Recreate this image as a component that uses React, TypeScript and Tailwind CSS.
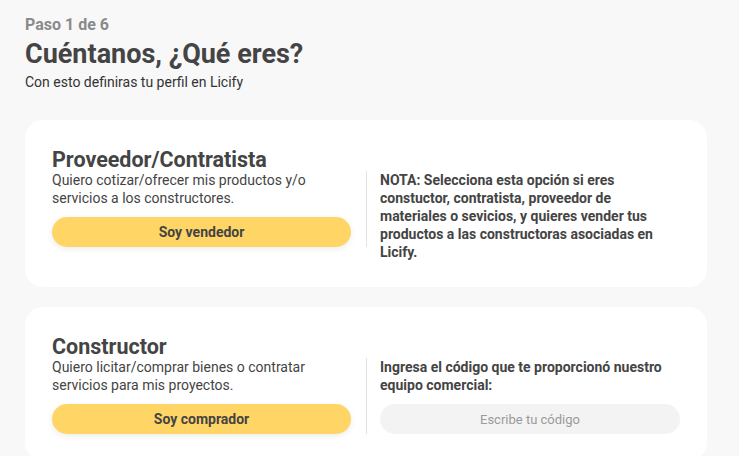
import React from 'react';

const font = { fontFamily: 'Roboto, "Noto Sans", sans-serif' };

interface RoleCardProps {
  title: string;
  description: React.ReactNode;
  action: string;
  children: React.ReactNode;
}

function RoleCard({ title, description, action, children }: RoleCardProps) {
  return (
    <section className="w-[682px] rounded-[18px] bg-white pt-[28px] pb-[26px] pl-[27px] pr-[27px]">
      <h2 className="text-[21.5px] leading-[23px] font-bold text-[#444444]">{title}</h2>
      <div className="flex items-start">
        {/* Left column */}
        <div className="w-[315px] shrink-0 border-r border-[#e3e3e3] pr-[15px]">
          <p className="text-[14px] leading-[18px] text-[#444444]">{description}</p>
          <button className="mt-[10px] h-[30px] w-full rounded-full bg-[#ffd666] text-[14px] font-bold text-[#444444] shadow-[0_2px_6px_rgba(0,0,0,0.08)]">
            {action}
          </button>
        </div>

        {/* Right column */}
        <div className="w-[313px] pl-[13px]">{children}</div>
      </div>
    </section>
  );
}

export default function App() {
  return (
    <div style={font} className="min-h-screen bg-[#f8f8f8] px-[25px] pt-[15px] pb-6">
      {/* Header */}
      <p className="text-[16px] leading-[20px] font-bold text-[#8a8a8a]">Paso 1 de 6</p>
      <h1 className="mt-[3px] text-[27px] leading-[32px] font-bold text-[#444444]">Cuéntanos, ¿Qué eres?</h1>
      <p className="mt-[3px] text-[14px] leading-[18px] text-[#333333]">Con esto definiras tu perfil en Licify</p>

      <div className="mt-[29px] flex flex-col gap-[20px]">
        <RoleCard
          title="Proveedor/Contratista"
          description={<>Quiero cotizar/ofrecer mis productos y/o<br />servicios a los constructores.</>}
          action="Soy vendedor"
        >
          <p className="text-[14px] leading-[18px] font-bold text-[#444444]">
            NOTA: Selecciona esta opción si eres constuctor, contratista, proveedor de materiales o sevicios, y quieres
            vender tus productos a las constructoras asociadas en Licify.
          </p>
        </RoleCard>

        <RoleCard
          title="Constructor"
          description={<>Quiero licitar/comprar bienes o contratar<br />servicios para mis proyectos.</>}
          action="Soy comprador"
        >
          <p className="text-[14px] leading-[18px] font-bold text-[#444444]">
            Ingresa el código que te proporcionó nuestro equipo comercial:
          </p>
          <input
            type="text"
            placeholder="Escribe tu código"
            className="mt-[10px] h-[30px] w-full rounded-full bg-[#f3f3f3] text-center text-[13px] text-[#444444] placeholder:text-[#9a9a9a] outline-none"
          />
        </RoleCard>
      </div>
    </div>
  );
}
